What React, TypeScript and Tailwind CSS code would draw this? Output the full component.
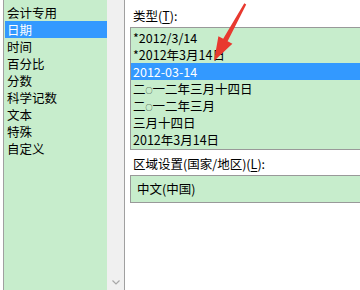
import React from 'react';

const categories = ['会计专用', '日期', '时间', '百分比', '分数', '科学记数', '文本', '特殊', '自定义'];

const types = [
    '*2012/3/14',
    '*2012年3月14日',
    '2012-03-14',
    '二○一二年三月十四日',
    '二○一二年三月',
    '三月十四日',
    '2012年3月14日',
];

const font = { fontFamily: '"Noto Sans CJK SC", "Noto Sans", sans-serif' };

// 把“○”渲染成小号圆圈，和原图里的样子一致
const renderType = (t: string) =>
    t.split('○').flatMap((part, i) =>
        i === 0
            ? [part]
            : [
                  <span key={i} className="inline-block w-[7px] text-center text-[7px] leading-none align-[1px]">
                      ○
                  </span>,
                  part,
              ]
    );

const App: React.FC = () => {
    return (
        <div
            className="relative flex w-[360px] h-[290px] overflow-hidden bg-white text-[12.5px] text-black"
            style={font}
        >
            {/* 左侧分类列表 */}
            <div className="ml-[3px] flex h-full w-[122px] border-x border-[#a0a0a0]">
                <div className="w-[103px] bg-[#c7edcc] pt-[4px]">
                    {categories.map((c) => (
                        <div
                            key={c}
                            className={
                                c === '日期'
                                    ? 'ml-[1px] h-[17px] pl-[2px] leading-[17px] bg-[#3399ff] text-white whitespace-nowrap'
                                    : 'ml-[1px] h-[17px] pl-[2px] leading-[17px] whitespace-nowrap'
                            }
                        >
                            {c}
                        </div>
                    ))}
                </div>
                <div className="flex w-[17px] flex-col items-center justify-end bg-[#f0f0f0] pb-[5px]">
                    <svg width="8" height="5" viewBox="0 0 8 5">
                        <path d="M0.5 0.5 L4 4 L7.5 0.5" fill="none" stroke="#a8a8a8" strokeWidth="1.2" />
                    </svg>
                </div>
            </div>

            {/* 右侧类型与区域设置 */}
            <div className="flex flex-1 flex-col pl-[5px]">
                <div className="mt-[7px] h-[17px] pl-[3px] leading-[17px] whitespace-nowrap">
                    类型(<span className="underline underline-offset-2">T</span>):
                </div>
                <div className="mt-[3px] border-y border-l border-[#999999] bg-[#c7edcc] py-[1px]">
                    {types.map((t) => (
                        <div
                            key={t}
                            className={
                                t === '2012-03-14'
                                    ? 'h-[17px] pl-[2px] leading-[17px] bg-[#3399ff] text-white whitespace-nowrap'
                                    : 'h-[17px] pl-[2px] leading-[17px] whitespace-nowrap'
                            }
                        >
                            {renderType(t)}
                        </div>
                    ))}
                </div>
                <div className="mt-[5px] h-[17px] pl-[3px] leading-[17px] whitespace-nowrap">
                    区域设置(国家/地区)(<span className="underline underline-offset-2">L</span>):
                </div>
                <div className="mt-[3px] h-[28px] border-y border-l border-[#999999] bg-[#c7edcc] pl-[6px] leading-[26px] whitespace-nowrap">
                    中文(中国)
                </div>
            </div>

            {/* 红色箭头标注 */}
            <svg className="pointer-events-none absolute left-0 top-0" width="360" height="290" viewBox="0 0 360 290">
                <polygon
                    points="214,61 218.4,36.2 223.2,38.8 244.3,3.2 246.2,4.4 227.6,41.2 232.4,43.8"
                    fill="#e8392f"
                />
            </svg>
        </div>
    );
};

export default App;
